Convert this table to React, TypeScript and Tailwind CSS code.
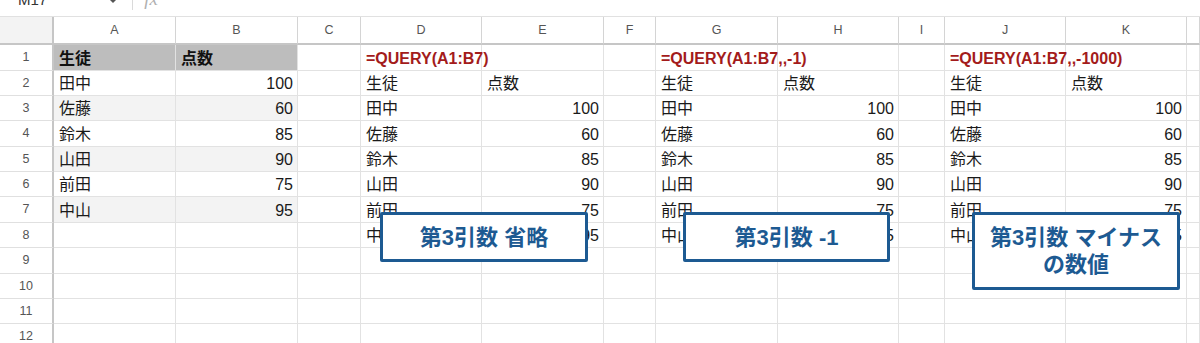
import React from "react";

const FONT = "font-['Liberation_Sans','Noto_Sans_CJK_JP',sans-serif]";

const COLS = ["A", "B", "C", "D", "E", "F", "G", "H", "I", "J", "K", ""];

// Sheet contents, one array per row (columns A..L)
const ROWS: string[][] = [
  ["生徒", "点数", "", "=QUERY(A1:B7)", "", "", "=QUERY(A1:B7,,-1)", "", "", "=QUERY(A1:B7,,-1000)", "", ""],
  ["田中", "100", "", "生徒", "点数", "", "生徒", "点数", "", "生徒", "点数", ""],
  ["佐藤", "60", "", "田中", "100", "", "田中", "100", "", "田中", "100", ""],
  ["鈴木", "85", "", "佐藤", "60", "", "佐藤", "60", "", "佐藤", "60", ""],
  ["山田", "90", "", "鈴木", "85", "", "鈴木", "85", "", "鈴木", "85", ""],
  ["前田", "75", "", "山田", "90", "", "山田", "90", "", "山田", "90", ""],
  ["中山", "95", "", "前田", "75", "", "前田", "75", "", "前田", "75", ""],
  ["", "", "", "中山", "95", "", "中山", "95", "", "中山", "95", ""],
  ["", "", "", "", "", "", "", "", "", "", "", ""],
  ["", "", "", "", "", "", "", "", "", "", "", ""],
  ["", "", "", "", "", "", "", "", "", "", "", ""],
  ["", "", "", "", "", "", "", "", "", "", "", ""],
];

function DataCell({ value, row, col }: { value: string; row: number; col: number }) {
  const isNumber = /^\d+$/.test(value);
  const isFormula = value.startsWith("=");
  const isHeader = row === 0 && col < 2;
  const isBand = col < 2 && (row === 2 || row === 4 || row === 6);

  let bg = "bg-white";
  if (isHeader) bg = "bg-[#bdbdbd]";
  else if (isBand) bg = "bg-[#f3f3f3]";

  return (
    <div
      className={`relative flex items-end pb-[1px] border-r border-b border-[#e2e2e2] ${bg} ${
        isNumber ? "justify-end pr-[4px]" : "justify-start pl-[5px]"
      } ${isFormula ? "overflow-visible z-10" : "overflow-hidden"}`}
    >
      <span
        className={`whitespace-nowrap leading-[20px] text-[16px] ${
          isFormula
            ? "font-bold text-[#a31b1b]"
            : isHeader
            ? "font-bold text-[#111]"
            : "text-[#1a1a1a]"
        }`}
      >
        {value}
      </span>
    </div>
  );
}

function TopStrip() {
  return (
    <div className="h-[16px] overflow-hidden flex items-start bg-white">
      <span className="ml-[18px] -mt-[10px] text-[15px] leading-[20px] text-[#333]">M17</span>
      <svg className="ml-[63px]" width="6" height="3" viewBox="0 0 6 3">
        <path d="M0 0 L6 0 L3 3 Z" fill="#555" />
      </svg>
      <div className="ml-[16px] w-px h-[10px] bg-[#dadada]" />
      <span className="ml-[11px] -mt-[11px] text-[19px] leading-[20px] italic font-['Liberation_Serif',serif] text-[#b0b0b0]">
        fx
      </span>
    </div>
  );
}

function Callout({ className, children }: { className: string; children: React.ReactNode }) {
  return (
    <div
      className={`absolute z-20 flex items-center justify-center text-center bg-white border-[3px] border-[#1d5a92] rounded-[2px] text-[#1d5a92] font-bold text-[22px] leading-[27px] ${className}`}
    >
      {children}
    </div>
  );
}

export default function App() {
  return (
    <div className={`relative w-[1200px] h-[343px] overflow-hidden bg-white ${FONT}`}>
      <TopStrip />
      <div className="h-px bg-[#e1e1e1]" />
      <div className="grid grid-cols-[54px_122px_122px_63px_121px_122px_52px_122px_121px_46px_121px_121px_1fr] grid-rows-[28px_26px_25px_25px_26px_25px_25px_26px_25px_26px_25px_25px_25px]">
        {/* column header row */}
        <div className="bg-[#f3f3f3] border-r-2 border-b-2 border-[#c6c6c6]" />
        {COLS.map((c, i) => (
          <div
            key={`h${i}`}
            className="flex items-center justify-center bg-white border-r border-b-2 border-r-[#d4d4d4] border-b-[#c6c6c6] text-[12.5px] text-[#555]"
          >
            {c}
          </div>
        ))}
        {ROWS.map((r, ri) => (
          <React.Fragment key={`r${ri}`}>
            <div className="flex items-center justify-center bg-white border-r-2 border-b border-r-[#c6c6c6] border-b-[#e0e0e0] text-[12.5px] text-[#555]">
              {ri + 1}
            </div>
            {r.map((v, ci) => (
              <DataCell key={`c${ri}-${ci}`} value={v} row={ri} col={ci} />
            ))}
          </React.Fragment>
        ))}
      </div>

      <Callout className="left-[380px] top-[212px] w-[208px] h-[50px]">第3引数 省略</Callout>
      <Callout className="left-[683px] top-[212px] w-[207px] h-[50px]">第3引数 -1</Callout>
      <Callout className="left-[972px] top-[212px] w-[208px] h-[78px]">
        <span>
          第3引数 マイナス
          <br />
          の数値
        </span>
      </Callout>
    </div>
  );
}
